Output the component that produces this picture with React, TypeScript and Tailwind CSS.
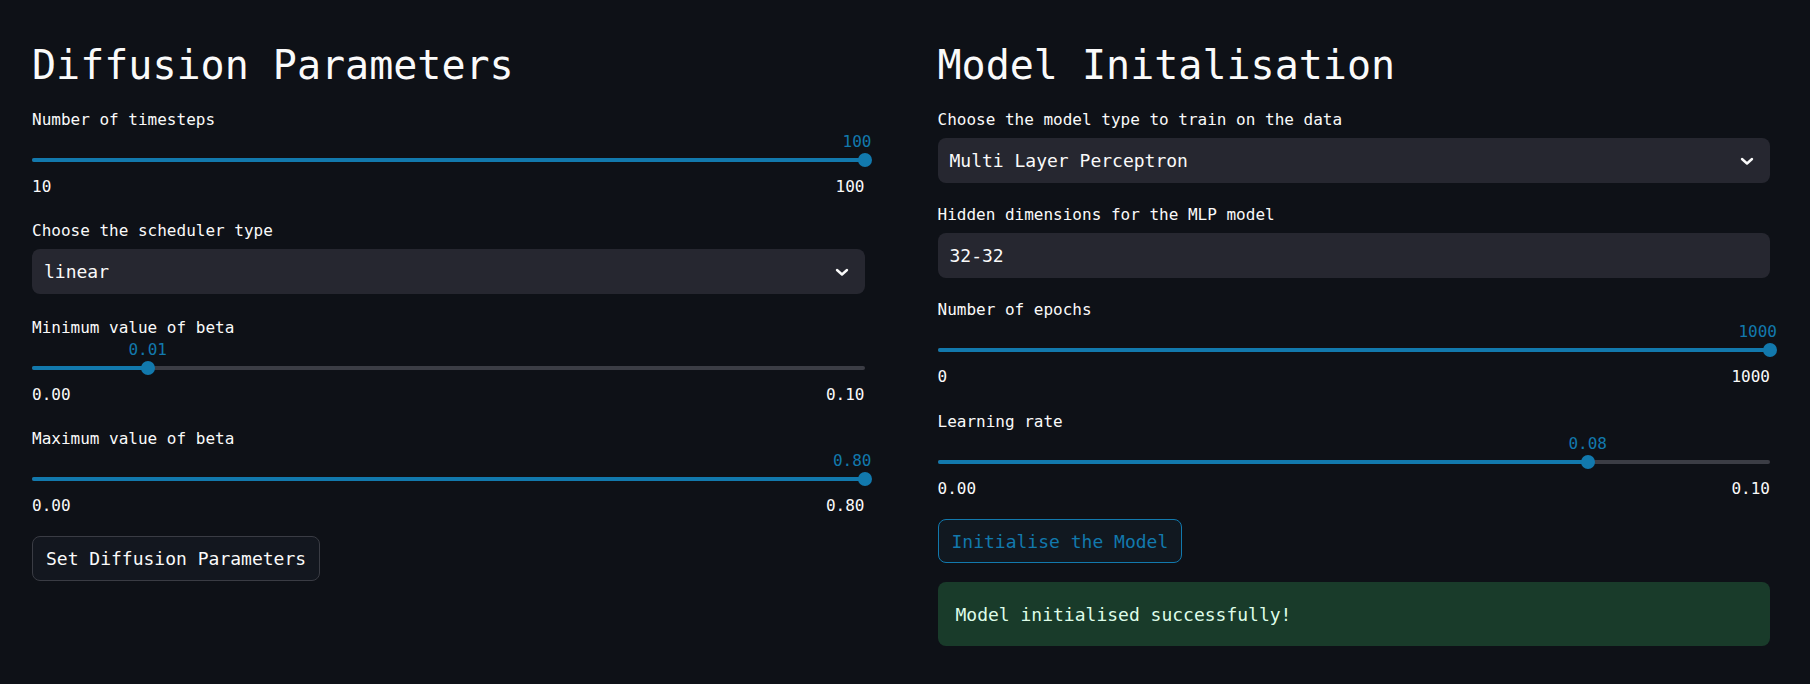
import React from "react";

const FONT = { fontFamily: '"DejaVu Sans Mono", "Liberation Mono", monospace' };

function Label({ children }: { children: React.ReactNode }) {
  return <div className="h-[20px] text-[16px] leading-[20px] text-[#fafafa] whitespace-nowrap">{children}</div>;
}

function Slider({ label, value, min, max, frac, className = "" }: { label: string; value: string; min: string; max: string; frac: number; className?: string }) {
  const atEnd = frac >= 1;
  return (
    <div className={className}>
      <Label>{label}</Label>
      <div className="relative mt-[2px] h-[20px]">
        {atEnd ? (
          <div className="absolute right-[-7px] top-0 text-[16px] leading-[20px] text-[#1279ad]">{value}</div>
        ) : (
          <div className="absolute top-0 -translate-x-1/2 text-[16px] leading-[20px] text-[#1279ad]" style={{ left: `${frac * 100}%` }}>
            {value}
          </div>
        )}
      </div>
      <div className="relative mt-[1px] h-[14px]">
        <div className="absolute left-0 right-0 top-[5px] h-[4px] rounded-full bg-[#3b3d45]" />
        <div className="absolute left-0 top-[5px] h-[4px] rounded-full bg-[#1279ad]" style={{ width: `${frac * 100}%` }} />
        <div className="absolute top-0 h-[14px] w-[14px] -translate-x-1/2 rounded-full bg-[#1279ad]" style={{ left: `${frac * 100}%` }} />
      </div>
      <div className="mt-[10px] flex h-[20px] justify-between text-[16px] leading-[20px] text-[#fafafa]">
        <span>{min}</span>
        <span>{max}</span>
      </div>
    </div>
  );
}

function Chevron() {
  return (
    <svg width="14" height="10" viewBox="0 0 14 10" className="shrink-0">
      <polyline points="2,3 7,7.5 12,3" fill="none" stroke="#fafafa" strokeWidth="2.4" strokeLinecap="round" strokeLinejoin="round" />
    </svg>
  );
}

function Select({ label, value, className = "" }: { label: string; value: string; className?: string }) {
  return (
    <div className={className}>
      <Label>{label}</Label>
      <div className="mt-[8px] flex h-[45px] items-center justify-between rounded-[8px] bg-[#262730] pl-[12px] pr-[16px]">
        <span className="text-[18px] text-[#fafafa]">{value}</span>
        <Chevron />
      </div>
    </div>
  );
}

function TextInput({ label, value, className = "" }: { label: string; value: string; className?: string }) {
  return (
    <div className={className}>
      <Label>{label}</Label>
      <div className="mt-[8px] flex h-[45px] items-center rounded-[8px] bg-[#262730] pl-[12px]">
        <span className="text-[18px] text-[#fafafa]">{value}</span>
      </div>
    </div>
  );
}

function Title({ children }: { children: React.ReactNode }) {
  return <h2 className="mt-[44px] h-[42px] text-[40px] leading-[42px] text-[#fafafa] whitespace-nowrap">{children}</h2>;
}

export default function App() {
  return (
    <div className="min-h-[684px] w-full bg-[#0e1117]" style={FONT}>
      <div className="grid grid-cols-2 gap-[73px] pl-[32px] pr-[40px]">
        <div className="flex flex-col">
          <Title>Diffusion Parameters</Title>
          <Slider className="mt-[24px]" label="Number of timesteps" value="100" min="10" max="100" frac={1} />
          <Select className="mt-[24px]" label="Choose the scheduler type" value="linear" />
          <Slider className="mt-[24px]" label="Minimum value of beta" value="0.01" min="0.00" max="0.10" frac={0.139} />
          <Slider className="mt-[24px]" label="Maximum value of beta" value="0.80" min="0.00" max="0.80" frac={1} />
          <div className="mt-[20px]">
            <button className="h-[45px] rounded-[8px] border border-[#3a3c44] bg-[#13171f] px-[13px] text-[18px] text-[#fafafa]">
              Set Diffusion Parameters
            </button>
          </div>
        </div>
        <div className="flex flex-col">
          <Title>Model Initalisation</Title>
          <Select className="mt-[24px]" label="Choose the model type to train on the data" value="Multi Layer Perceptron" />
          <TextInput className="mt-[22px]" label="Hidden dimensions for the MLP model" value="32-32" />
          <Slider className="mt-[22px]" label="Number of epochs" value="1000" min="0" max="1000" frac={1} />
          <Slider className="mt-[25px]" label="Learning rate" value="0.08" min="0.00" max="0.10" frac={0.781} />
          <div className="mt-[20px]">
            <button className="h-[44px] rounded-[8px] border border-[#1279ad] bg-[#111820] px-[13px] text-[18px] text-[#1279ad]">
              Initialise the Model
            </button>
          </div>
          <div className="mt-[19px] flex h-[64px] items-center rounded-[8px] bg-[#193b2a] px-[18px] text-[18px] text-[#dffde9]">
            Model initialised successfully!
          </div>
        </div>
      </div>
    </div>
  );
}
